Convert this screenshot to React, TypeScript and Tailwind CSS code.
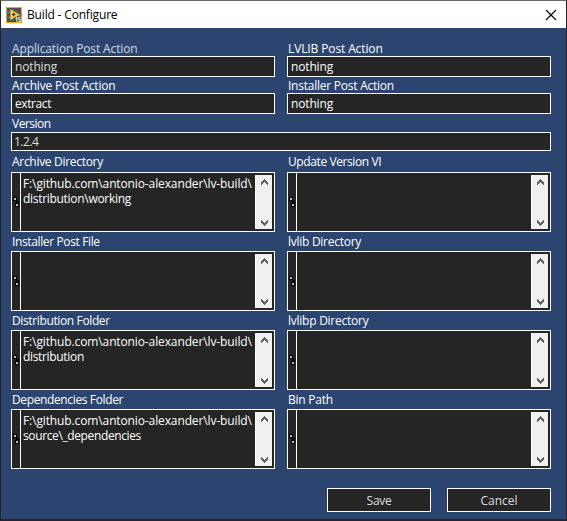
import React from "react";

function Label({ text, className }: { text: string; className: string }) {
  return <div className={`flex items-center pl-px whitespace-nowrap ${className}`}>{text}</div>;
}

interface TextFieldProps {
  label: string;
  value: string;
  labelClass: string;
  valueClass?: string;
  dim?: boolean;
}

function TextField({ label, value, labelClass, valueClass = "", dim = false }: TextFieldProps) {
  return (
    <div className="w-[264px]">
      <Label text={label} className={`h-4 pt-[2px] ${labelClass} ${dim ? "text-[#d5d9e2]" : ""}`} />
      <div className={`flex h-[21px] items-center border border-white bg-[#252525] pl-[3px] ${valueClass} ${dim ? "text-[#dedede]" : ""}`}>
        {value}
      </div>
    </div>
  );
}

function Chevron({ down = false }: { down?: boolean }) {
  return (
    <svg width="7" height="6" viewBox="0 0 7 6" shapeRendering="crispEdges" className={down ? "rotate-180" : ""}>
      <path d="M3 0h1v1h1v1h1v1h1v3h-1v-1h-1v-1h-1v-1h-1v1h-1v1h-1v1h-1v-3h1v-1h1v-1h1z" fill="#606060" />
    </svg>
  );
}

interface PathLine {
  text: string;
  className: string;
}

interface PathFieldProps {
  label: string;
  labelClass: string;
  lines?: PathLine[];
  first?: boolean;
}

function PathField({ label, labelClass, lines = [], first = false }: PathFieldProps) {
  return (
    <div className="w-[264px]">
      <Label text={label} className={`${first ? "h-[21px]" : "h-[19px]"} ${labelClass}`} />
      <div className="flex h-[60px] border border-white bg-[#252525]">
        <div className="flex w-[9px] shrink-0 items-center border-r border-white">
          <svg width="8" height="12" viewBox="0 0 8 12" shapeRendering="crispEdges" className="shrink-0">
            <path d="M1 1h4v4h2v6H3V7h1V5H1z" fill="#000" />
            <path d="M2 2h2v2H2zM4 8h2v2H4z" fill="#bdbdbd" />
          </svg>
        </div>
        <div className="min-w-0 flex-1 pt-[3px] pl-[2px] leading-[15px] whitespace-nowrap">
          {lines.map((line) => (
            <div key={line.text} className={line.className}>{line.text}</div>
          ))}
        </div>
        <div className="my-[2px] mr-[2px] flex w-[17px] shrink-0 flex-col items-center justify-between border-l border-white bg-[#f0f0f0] pt-1 pb-[3px]">
          <Chevron />
          <Chevron down />
        </div>
      </div>
    </div>
  );
}

const root: PathLine = {
  text: "F:\\github.com\\antonio-alexander\\lv-build\\",
  className: "tracking-[-0.12px]",
};

function AppIcon() {
  return (
    <svg width="16" height="16" viewBox="0 0 16 16">
      <rect width="16" height="16" fill="#e9a820" />
      <rect x="1" y="1" width="14" height="14" fill="#505357" />
      <path d="M0 5.5h5M0 10.5h5M12 8h4" stroke="#3b8fc4" strokeWidth="1.6" />
      <path d="M4.5 2.2V13L13.5 7.8z" fill="#ffd34d" stroke="#d78b16" strokeWidth="0.6" />
      <path d="M6 7.5h3.4M7.7 5.8v3.4" stroke="#222" strokeWidth="1.2" />
      <rect x="8.5" y="10" width="6.5" height="5" fill="#41464d" />
      <text x="9" y="14.6" fontSize="6.3" fontWeight="700" fill="#fff" textLength="6" lengthAdjust="spacingAndGlyphs">15</text>
    </svg>
  );
}

function Button({ text, className = "" }: { text: string; className?: string }) {
  return (
    <button className={`flex h-6 w-[104px] items-center justify-center border border-white bg-[#252525] pt-px text-[#dedede] ${className}`}>
      {text}
    </button>
  );
}

export default function App() {
  return (
    <div className="flex h-[521px] w-[567px] flex-col overflow-hidden border-x border-t border-b-2 border-[#252529] border-t-[#6b6b6b] bg-[#2c4570] font-['Open_Sans','Noto_Sans',sans-serif] text-[12px] leading-none text-white">
      <div className="flex h-[27px] shrink-0 items-center bg-white pr-[9px] pl-[5px] text-black">
        <AppIcon />
        <span className="ml-[5px] tracking-[-0.17px]">Build - Configure</span>
        <svg width="12" height="12" viewBox="0 0 12 12" className="ml-auto">
          <path d="M1 1 L11 11 M11 1 L1 11" stroke="#000" strokeWidth="1.2" />
        </svg>
      </div>
      <div className="flex flex-col pt-3 pl-[10px]">
        <div className="flex gap-3">
          <TextField label="Application Post Action" labelClass="tracking-[-0.13px]" value="nothing" valueClass="tracking-[-0.15px]" dim />
          <TextField label="LVLIB Post Action" labelClass="tracking-[-0.12px]" value="nothing" valueClass="tracking-[-0.15px]" />
        </div>
        <div className="flex gap-3">
          <TextField label="Archive Post Action" labelClass="tracking-[-0.2px]" value="extract" valueClass="tracking-[-0.4px]" />
          <TextField label="Installer Post Action" labelClass="tracking-[-0.24px]" value="nothing" valueClass="tracking-[-0.15px]" />
        </div>
        <div className="w-[540px]">
          <Label text="Version" className="h-[18px] pt-px tracking-[-0.5px]" />
          <div className="flex h-[19px] items-center border border-white bg-[#252525] pl-[2px] tracking-[-0.5px] text-[#dedede]">1.2.4</div>
        </div>
        <div className="flex gap-3">
          <PathField
            first
            label="Archive Directory"
            labelClass="tracking-[-0.3px]"
            lines={[root, { text: "distribution\\working", className: "tracking-[-0.3px]" }]}
          />
          <PathField first label="Update Version VI" labelClass="tracking-[-0.4px]" />
        </div>
        <div className="flex gap-3">
          <PathField label="Installer Post File" labelClass="tracking-[-0.37px]" />
          <PathField label="lvlib Directory" labelClass="tracking-[-0.27px]" />
        </div>
        <div className="flex gap-3">
          <PathField
            label="Distribution Folder"
            labelClass="tracking-[-0.37px]"
            lines={[root, { text: "distribution", className: "tracking-[-0.33px]" }]}
          />
          <PathField label="lvlibp Directory" labelClass="tracking-[-0.25px]" />
        </div>
        <div className="flex gap-3">
          <PathField
            label="Dependencies Folder"
            labelClass="tracking-[-0.37px]"
            lines={[root, { text: "source\\_dependencies", className: "tracking-[-0.38px]" }]}
          />
          <PathField label="Bin Path" labelClass="tracking-[-0.25px]" />
        </div>
        <div className="mt-[19px] flex w-[540px] justify-end gap-4">
          <Button text="Save" className="tracking-[-0.3px]" />
          <Button text="Cancel" />
        </div>
      </div>
    </div>
  );
}
